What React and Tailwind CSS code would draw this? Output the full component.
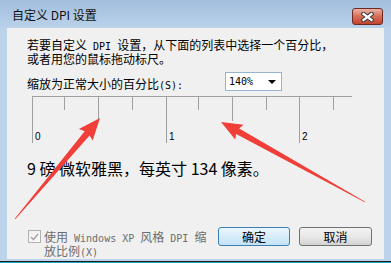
import React from "react";

function M({ children }) {
  return (
    <span className="font-['DejaVu_Sans_Mono',monospace] text-[10px] whitespace-pre">
      {children}
    </span>
  );
}

function arrowPts(tx, ty, px, py, hl, hw, sw0, sw1) {
  const dx = px - tx;
  const dy = py - ty;
  const L = Math.hypot(dx, dy);
  const ux = dx / L;
  const uy = dy / L;
  const nx = -uy;
  const ny = ux;
  const bx = px - ux * hl;
  const by = py - uy * hl;
  const pts = [
    [tx + nx * sw0, ty + ny * sw0],
    [bx + nx * sw1, by + ny * sw1],
    [bx + nx * hw - ux * 2, by + ny * hw - uy * 2],
    [px, py],
    [bx - nx * hw - ux * 2, by - ny * hw - uy * 2],
    [bx - nx * sw1, by - ny * sw1],
    [tx - nx * sw0, ty - ny * sw0],
  ];
  return pts.map((p) => p[0].toFixed(1) + "," + p[1].toFixed(1)).join(" ");
}

function Ruler() {
  const ticks = [
    [0, 47],
    [32, 14],
    [66, 25],
    [100, 14],
    [134, 47],
    [166, 14],
    [200, 25],
    [234, 14],
    [267, 47],
    [301, 14],
  ];
  return (
    <svg width="320" height="47" className="block">
      <line x1="0" y1="0.5" x2="320" y2="0.5" stroke="#a0a0a0" strokeWidth="1" />
      {ticks.map(([x, h]) => (
        <line key={x} x1={x + 0.5} y1="0" x2={x + 0.5} y2={h} stroke="#a0a0a0" strokeWidth="1" />
      ))}
      <text x="3" y="44" fontSize="10" fontFamily="Liberation Sans, sans-serif" fill="#000">0</text>
      <text x="137" y="44" fontSize="10" fontFamily="Liberation Sans, sans-serif" fill="#000">1</text>
      <text x="270" y="44" fontSize="10" fontFamily="Liberation Sans, sans-serif" fill="#000">2</text>
    </svg>
  );
}

export default function App() {
  return (
    <div className="relative w-[391px] h-[263px] overflow-hidden bg-[#bcd3eb] font-['Noto_Sans_CJK_SC',sans-serif] text-black">
      {/* Title bar */}
      <div className="flex h-[28px] items-start bg-gradient-to-b from-[#a2bedd] to-[#bad1ea]">
        <div className="pl-[12px] pt-[9px] text-[12px] leading-[12px] text-[#111]">
          自定义 DPI 设置
        </div>
        <div className="ml-auto mr-[8px] mt-[8px] flex h-[17px] w-[31px] items-center justify-center rounded-[3px] border border-[#6e2a22] bg-gradient-to-b from-[#eab2a5] via-[#d66c55] to-[#c3432c]">
          <svg width="13" height="10" viewBox="0 0 13 10">
            <path d="M2.5 2 L10.5 8 M10.5 2 L2.5 8" stroke="#3f3f46" strokeWidth="4.4" strokeLinecap="square" fill="none" />
            <path d="M2.5 2 L10.5 8 M10.5 2 L2.5 8" stroke="#ffffff" strokeWidth="2.2" strokeLinecap="square" fill="none" />
          </svg>
        </div>
      </div>

      {/* Panel */}
      <div className="mx-[7px] h-[231px] bg-[#f0f0f0] pl-[20px] pt-[11px]">
        <div className="text-[12px] leading-[12px]">
          <div className="whitespace-nowrap">
            若要自定义<M> DPI </M>设置，从下面的列表中选择一个百分比，
          </div>
          <div className="whitespace-nowrap">或者用您的鼠标拖动标尺。</div>
        </div>

        <div className="mt-[7px] flex items-start">
          <div className="mt-[6px] w-[198px] whitespace-nowrap text-[12px] leading-[12px]">
            缩放为正常大小的百分比<M>(S):</M>
          </div>
          <div className="flex h-[19px] w-[57px] items-center border border-[#98b3d2] bg-white pl-[3px] leading-[12px]">
            <M>140%</M>
            <svg width="8" height="4" viewBox="0 0 8 4" className="ml-auto mr-[5px]">
              <path d="M0 0 H8 L4 4 Z" fill="#000" />
            </svg>
          </div>
        </div>

        <div className="ml-[5px] mt-[4px]">
          <Ruler />
        </div>

        <div className="mt-[14px] whitespace-nowrap text-[16px] leading-[22px]">
          9 磅 微软雅黑，每英寸 134 像素。
        </div>

        <div className="mt-[48px] flex items-start pl-[1px]">
          <div className="flex w-[190px] items-start">
            <div className="mt-[3px] flex h-[13px] w-[13px] shrink-0 items-center justify-center border border-[#b1b1b1] bg-gradient-to-br from-[#f0f0f0] to-[#fbfbfb]">
              <svg width="9" height="8" viewBox="0 0 9 8">
                <path d="M1 4 L3.5 6.5 L8 1" stroke="#a8a8a8" strokeWidth="1.6" fill="none" />
              </svg>
            </div>
            <div className="ml-[3px] mt-[4px] text-[12px] leading-[12px] text-[#6d6d6d]">
              <div className="whitespace-nowrap">
                使用<M> Windows XP </M>风格<M> DPI </M>缩
              </div>
              <div className="whitespace-nowrap">
                放比例<M>(X)</M>
              </div>
            </div>
          </div>
          <button className="flex h-[19px] w-[72px] items-center justify-center rounded-[3px] border border-[#3c7fb1] bg-gradient-to-b from-[#ecf6fd] to-[#c3e3f7] text-[12px] leading-[12px]">
            确定
          </button>
          <button className="ml-[9px] flex h-[19px] w-[73px] items-center justify-center rounded-[3px] border border-[#707070] bg-gradient-to-b from-[#f3f3f3] via-[#e8e8e8] to-[#d3d3d3] text-[12px] leading-[12px]">
            取消
          </button>
        </div>
      </div>

      {/* Bottom frame */}
      <div className="h-[2px]" />
      <div className="h-[1px] bg-[#1b1b1b]" />
      <div className="h-[1px] bg-[#1fa6c9]" />

      {/* Annotation arrows */}
      <svg width="391" height="263" className="pointer-events-none absolute left-0 top-0">
        <polygon points={arrowPts(15, 219, 100, 118, 20, 9, 0.4, 3.2)} fill="#f03f38" />
        <polygon points={arrowPts(365, 202, 221, 122, 19, 8.5, 0.4, 3.2)} fill="#f03f38" />
      </svg>
    </div>
  );
}
